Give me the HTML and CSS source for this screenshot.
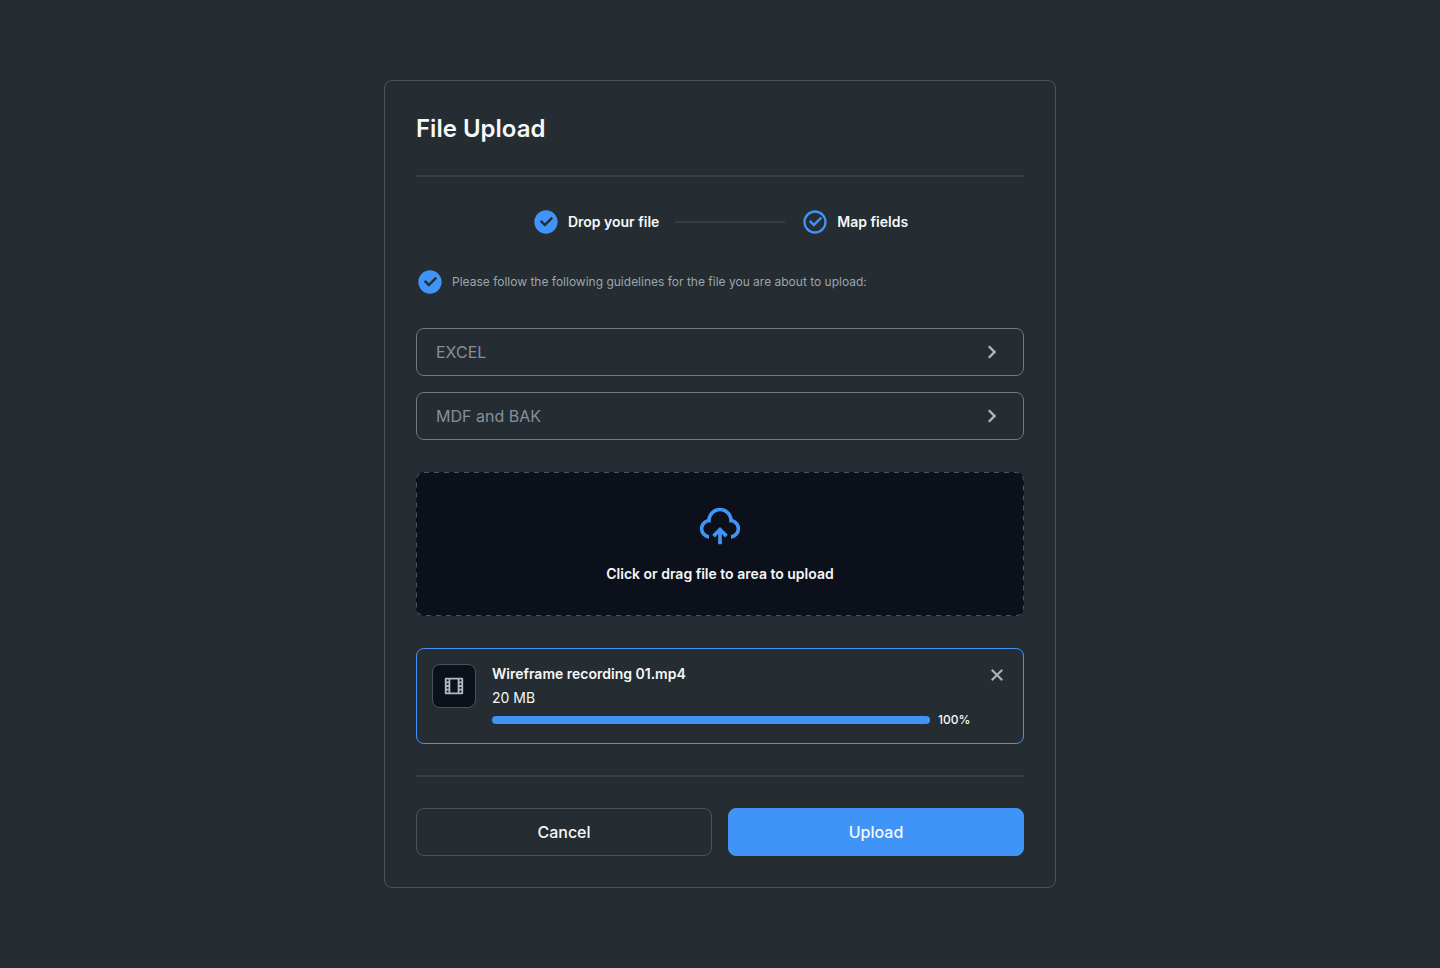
FILE: index.html
```html
<!DOCTYPE html>
<html lang="en">
<head>
<meta charset="utf-8">
<meta name="viewport" content="width=device-width, initial-scale=1">
<title>File Upload</title>
<link rel="stylesheet" href="styles.css">
</head>
<body class="page">
<svg class="sprite" aria-hidden="true">
  <symbol id="check-fill" viewBox="0 0 24 24"><path d="M12 22C6.477 22 2 17.523 2 12S6.477 2 12 2s10 4.477 10 10-4.477 10-10 10zm-.997-6l7.07-7.071-1.414-1.414-5.656 5.657-2.829-2.829-1.414 1.414L11.003 16z"/></symbol>
  <symbol id="check-line" viewBox="0 0 24 24"><path d="M12 22C6.477 22 2 17.523 2 12S6.477 2 12 2s10 4.477 10 10-4.477 10-10 10zm0-2a8 8 0 1 0 0-16 8 8 0 0 0 0 16zm-.997-4L6.76 11.757l1.414-1.414 2.829 2.829 5.656-5.657 1.415 1.414L11.003 16z"/></symbol>
  <symbol id="chevron" viewBox="0 0 24 24"><path d="M13.172 12l-4.95-4.95 1.414-1.414L16 12l-6.364 6.364-1.414-1.414z"/></symbol>
</svg>
<main class="card">
  <h1 class="title">File Upload</h1>
  <hr class="divider">
  <ol class="steps">
    <li class="step"><svg class="icon-check"><use href="#check-fill"/></svg>Drop your file</li>
    <li class="step-line" aria-hidden="true"></li>
    <li class="step"><svg class="icon-check"><use href="#check-line"/></svg>Map fields</li>
  </ol>
  <p class="hint"><svg class="icon-check"><use href="#check-fill"/></svg>Please follow the following guidelines for the file you are about to upload:</p>
  <div class="guides">
    <button class="guide" type="button">EXCEL<svg class="icon-chevron"><use href="#chevron"/></svg></button>
    <button class="guide" type="button">MDF and BAK<svg class="icon-chevron"><use href="#chevron"/></svg></button>
  </div>
  <label class="dropzone" for="file">
    <svg class="dropzone-border" aria-hidden="true"><rect width="100%" height="100%" rx="8"/></svg>
    <svg class="icon-cloud" viewBox="0 0 24 24" aria-hidden="true"><path d="M12 12.586l4.243 4.242-1.415 1.415L13 16.415V22h-2v-5.587l-1.828 1.83-1.415-1.415L12 12.586zM12 2a7.001 7.001 0 0 1 6.954 6.194 5.5 5.5 0 0 1-.953 10.784v-2.014a3.5 3.5 0 1 0-1.112-6.91 5 5 0 1 0-9.777 0 3.5 3.5 0 0 0-1.292 6.88l.18.03v2.014a5.5 5.5 0 0 1-.954-10.784A7 7 0 0 1 12 2z"/></svg>
    <span>Click or drag file to area to upload</span>
    <input class="file-input" id="file" type="file">
  </label>
  <section class="file">
    <span class="file-thumb"><svg class="icon-small" viewBox="0 0 24 24" aria-hidden="true"><path d="M2 3.993A1 1 0 0 1 2.992 3h18.016c.548 0 .992.445.992.993v16.014a1 1 0 0 1-.992.993H2.992A.993.993 0 0 1 2 20.007V3.993zM8 5v14h8V5H8zM4 5v2h2V5H4zm14 0v2h2V5h-2zM4 9v2h2V9H4zm14 0v2h2V9h-2zM4 13v2h2v-2H4zm14 0v2h2v-2h-2zM4 17v2h2v-2H4zm14 0v2h2v-2h-2z"/></svg></span>
    <div class="file-body">
      <label class="file-name" for="file-progress">Wireframe recording 01.mp4</label>
      <span class="file-size">20 MB</span>
      <div class="file-status">
        <progress class="progress" id="file-progress" value="100" max="100"></progress>
        <span class="percent">100%</span>
      </div>
    </div>
    <button class="close" type="button" aria-label="Remove file"><svg class="icon-small icon-bold" viewBox="0 0 24 24" aria-hidden="true"><path d="M12 10.586l4.95-4.95 1.414 1.414-4.95 4.95 4.95 4.95-1.414 1.414-4.95-4.95-4.95 4.95-1.414-1.414 4.95-4.95-4.95-4.95L7.05 5.636z"/></svg></button>
  </section>
  <hr class="divider">
  <div class="actions">
    <button class="btn" type="button">Cancel</button>
    <button class="btn btn-primary" type="button">Upload</button>
  </div>
</main>
</body>
</html>
```
FILE: styles.css
```css
* { box-sizing: border-box; margin: 0; padding: 0; }

.page {
  min-height: 100vh;
  display: flex;
  align-items: center;
  justify-content: center;
  padding: 32px 16px;
  background: #252c32;
  color: #f6f8f9;
  font-family: Inter, "Liberation Sans", sans-serif;
  font-size: 14px;
  line-height: 20px;
}

svg { display: block; flex: none; fill: currentColor; }
button { font: inherit; color: inherit; background: none; cursor: pointer; }
.sprite { position: absolute; width: 0; height: 0; }

.card {
  width: 100%;
  max-width: 672px;
  padding: 31px;
  border: 1px solid #48535b;
  border-radius: 8px;
}

.title { padding-top: 1px; font-size: 24px; line-height: 32px; font-weight: 600; }
.divider { height: 2px; margin: 31px 0; border: 0; background: #353e46; }
.title + .divider { margin-top: 30px; }

.steps {
  display: flex;
  align-items: center;
  justify-content: center;
  gap: 16px;
  list-style: none;
}
.step { display: flex; align-items: center; gap: 8px; font-weight: 600; }
.step-line { width: 110px; height: 2px; background: #353e46; }
.icon-check { width: 28px; height: 28px; color: #4094f7; }

.hint {
  display: flex;
  align-items: center;
  gap: 8px;
  margin: 32px 0;
  font-size: 12px;
  color: #9aa6ac;
}

.guides { display: flex; flex-direction: column; gap: 16px; }
.guide {
  display: flex;
  align-items: center;
  justify-content: space-between;
  height: 48px;
  padding: 0 19px;
  border: 1px solid #6e7c87;
  border-radius: 8px;
  font-size: 16px;
  line-height: 24px;
  color: #84919a;
}
.icon-chevron { width: 24px; height: 24px; color: #b0babf; stroke: currentColor; stroke-width: 0.4; }

.dropzone {
  position: relative;
  display: flex;
  flex-direction: column;
  align-items: center;
  gap: 16px;
  margin: 32px 0;
  padding: 32px;
  border-radius: 8px;
  background: #0b101a;
  font-weight: 600;
  cursor: pointer;
}
.dropzone-border {
  position: absolute;
  inset: 0;
  width: 100%;
  height: 100%;
  border-radius: 8px;
  fill: none;
  stroke: #48535b;
  stroke-width: 2;
  stroke-dasharray: 5 5;
}
.icon-cloud { width: 44px; height: 44px; color: #4094f7; }
.file-input { position: absolute; inset: 0; width: 100%; height: 100%; opacity: 0; cursor: pointer; }

.file {
  display: flex;
  align-items: flex-start;
  gap: 16px;
  padding: 15px;
  border: 1px solid #4094f7;
  border-radius: 8px;
}
.file-thumb {
  display: grid;
  place-items: center;
  width: 44px;
  height: 44px;
  border: 1px solid #48535b;
  border-radius: 8px;
  background: #0b101a;
  color: #b0babf;
}
.icon-small { width: 22px; height: 22px; }
.icon-bold { stroke: currentColor; stroke-width: 0.4; }
.file-body { display: flex; flex: 1; flex-direction: column; gap: 4px; }
.file-name { font-weight: 600; }
.file-status { display: flex; align-items: center; gap: 8px; }
.progress {
  flex: 1;
  height: 8px;
  appearance: none;
  border: 0;
  border-radius: 4px;
  overflow: hidden;
  background: #37414a;
}
.progress::-webkit-progress-bar { background: #37414a; }
.progress::-webkit-progress-value { background: #4094f7; }
.progress::-moz-progress-bar { background: #4094f7; }
.percent { width: 32px; font-size: 12px; line-height: 16px; font-weight: 500; }
.close { border: 0; color: #b0babf; }

.actions { display: grid; grid-template-columns: 1fr 1fr; gap: 16px; }
.btn {
  height: 48px;
  border: 1px solid #48535b;
  border-radius: 8px;
  font-size: 16px;
  line-height: 24px;
  font-weight: 500;
}
.btn-primary { border-color: #4094f7; background: #4094f7; }
```
